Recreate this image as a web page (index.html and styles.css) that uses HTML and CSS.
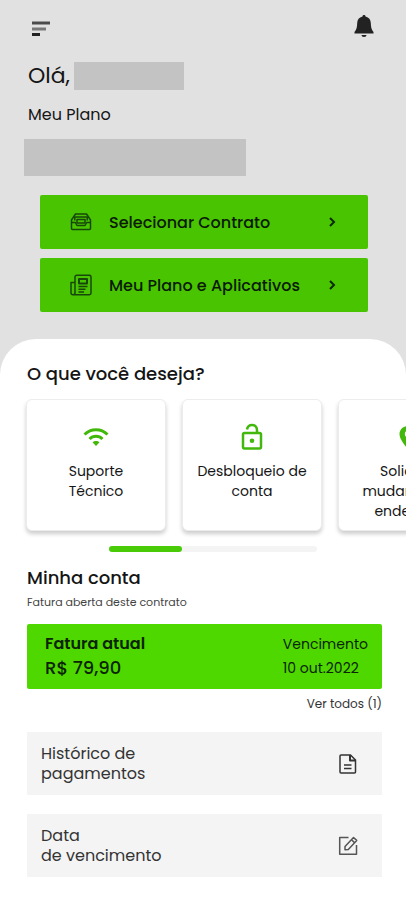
FILE: index.html
```
<!DOCTYPE html>
<html lang="pt-BR">
<head>
    <meta charset="UTF-8">
    <meta name="viewport" content="width=device-width, initial-scale=1.0">
    <title>Minha conta</title>
    <link rel="stylesheet" href="styles.css">
</head>
<body>

<header class="hero">
    <nav class="topbar">
        <button class="icon-btn" type="button" aria-label="Menu">
            <svg width="20" height="22" viewBox="0 0 20 22">
                <path d="M0 8h18" stroke="#4a4a4a" stroke-width="3"/>
                <path d="M0 14h14" stroke="#777" stroke-width="3"/>
                <path d="M0 19.500h8" stroke="#222" stroke-width="3"/>
            </svg>
        </button>
        <button class="icon-btn" type="button" aria-label="Notificações">
            <svg width="20" height="22" viewBox="0 0 20 22">
                <path d="M10 0C9 0 8.500.6 8.500 1.400C5 2.200 3.300 4.500 3.200 8C3 12 2.800 14.500.5 17v1.500h19V17C17.200 14.500 17 12 16.800 8C16.700 4.500 15 2.200 11.500 1.400C11.500.6 11 0 10 0Z" fill="#222"/>
                <path d="M7.500 20h5c0 1.200-1 2-2.500 2s-2.500-.8-2.500-2Z" fill="#222"/>
            </svg>
        </button>
    </nav>

    <h1 class="greeting">Olá, <span class="hidden-name"></span></h1>
    <p class="plan-label">Meu Plano</p>
    <div class="hidden-plan"></div>

    <div class="actions">
        <a class="action" href="#contrato">
            <svg class="action-icon" width="22" height="22" viewBox="0 0 22 22" fill="none" stroke="#17470a" stroke-width="1.500" stroke-linejoin="round">
                <path d="M1.500 9L5.500 3h11l4 6v8.500c0 .6-.4 1-1 1h-17c-.6 0-1-.4-1-1Z"/>
                <path d="M1.500 11.500h3.800l1.700 3h8l1.700-3h3.800"/>
                <path d="M4.800 9.500V6h12.400v3.500M7 8.500h8v3.500H7Z"/>
            </svg>
            <span class="action-text">Selecionar Contrato</span>
            <svg width="8" height="10" viewBox="0 0 8 10" fill="none" stroke="#0d2a04" stroke-width="2"><path d="M2 1l4 4-4 4"/></svg>
        </a>
        <a class="action" href="#plano">
            <svg class="action-icon" width="22" height="22" viewBox="0 0 22 22" fill="none" stroke="#17470a" stroke-width="1.500" stroke-linejoin="round">
                <path d="M5 19V3c0-1 .7-1.700 1.700-1.700h12.600c1 0 1.700.7 1.700 1.700v16c0 1-.7 1.700-1.700 1.700H3c-1.200 0-2-.8-2-2V8.500h4M5 19c0 1-.8 1.700-2 1.700"/>
                <path d="M9 5h8v4.500H9Z" stroke-width="2"/>
                <path d="M8.500 12.500h9M8.500 15.200h7M8.500 18h5.500"/>
            </svg>
            <span class="action-text">Meu Plano e Aplicativos</span>
            <svg width="8" height="10" viewBox="0 0 8 10" fill="none" stroke="#0d2a04" stroke-width="2"><path d="M2 1l4 4-4 4"/></svg>
        </a>
    </div>
</header>

<main class="panel">
    <h2 class="title">O que você deseja?</h2>

    <div class="cards">
        <a class="card" href="#suporte">
            <svg class="card-icon" width="28" height="28" viewBox="0 0 28 28" fill="none" stroke="#43b80c" stroke-width="3">
                <path d="M2.500 11.500C9 5 19 5 25.500 11.500"/>
                <path d="M7.500 16c3.700-3.700 9.300-3.700 13 0"/>
                <path d="M10.500 19.300c2-1.900 5-1.900 7 0L14 23Z" fill="#43b80c" stroke="none"/>
            </svg>
            <span>Suporte<br>Técnico</span>
        </a>
        <a class="card" href="#desbloqueio">
            <svg class="card-icon" width="28" height="28" viewBox="0 0 28 28" fill="none" stroke="#43b80c" stroke-width="2.500">
                <rect x="5" y="10" width="18" height="15.500" rx="1.500"/>
                <path d="M9 6.500C9.500 3.700 11.500 2 14 2c3 0 5 2 5 5v3"/>
                <circle cx="14" cy="17.800" r="2.300" fill="#43b80c" stroke="none"/>
            </svg>
            <span>Desbloqueio de<br>conta</span>
        </a>
        <a class="card" href="#mudanca">
            <svg class="card-icon" width="28" height="28" viewBox="0 0 28 28">
                <path d="M14 3C9 3 5.500 6.600 5.500 11.200C5.500 17 14 26 14 26s8.500-9 8.500-14.800C22.500 6.600 19 3 14 3Zm0 11.200a3.200 3.200 0 1 1 0-6.400a3.200 3.200 0 0 1 0 6.400Z" fill="#43b80c"/>
            </svg>
            <span>Solicitar<br>mudança de<br>endereço</span>
        </a>
    </div>
    <div class="scroll-track"><div class="scroll-thumb"></div></div>

    <h2 class="title">Minha conta</h2>
    <p class="subtitle">Fatura aberta deste contrato</p>

    <section class="invoice">
        <div>
            <p class="invoice-name">Fatura atual</p>
            <p class="invoice-value">R$ 79,90</p>
        </div>
        <div>
            <p class="due">Vencimento</p>
            <p class="due">10 out.2022</p>
        </div>
    </section>
    <a class="see-all" href="#faturas">Ver todos (1)</a>

    <div class="options">
        <a class="option" href="#historico">
            <span>Histórico de<br>pagamentos</span>
            <svg width="20" height="20" viewBox="0 0 20 20" fill="none" stroke="#333" stroke-width="1.500" stroke-linejoin="round">
                <path d="M3 1h9.500l5 5v12c0 .6-.4 1-1 1H3c-.6 0-1-.4-1-1V2c0-.6.4-1 1-1Z"/>
                <path d="M12 1v5.500h5.500" stroke-width="2"/>
                <path d="M6 11h7.500M6 14.500h7.500"/>
            </svg>
        </a>
        <a class="option" href="#vencimento">
            <span>Data<br>de vencimento</span>
            <svg width="20" height="20" viewBox="0 0 20 20" fill="none" stroke="#555" stroke-width="1.500" stroke-linejoin="round">
                <path d="M10.500 1.500H1.700v16.800h16.800V9"/>
                <path d="M7 13.800v-3.300L15.500 1.500l3.200 2.900-8.400 9.100Z"/>
                <path d="M13.500 3.800l3 2.800"/>
            </svg>
        </a>
    </div>
</main>

</body>
</html>
```
FILE: styles.css
```
* {
    box-sizing: border-box;
    margin: 0;
    padding: 0;
}

body {
    display: flex;
    flex-direction: column;
    min-height: 100vh;
    background: #e1e1e1;
    color: #151515;
    font-family: "Poppins", "Inter", sans-serif;
}

a {
    color: inherit;
    text-decoration: none;
}

svg {
    display: block;
    flex-shrink: 0;
}

/* Top area */
.hero {
    padding: 15px 24px 27px;
}

.topbar {
    display: flex;
    justify-content: space-between;
    align-items: center;
    height: 22px;
    padding: 0 8px;
}

.icon-btn {
    border: 0;
    background: none;
    cursor: pointer;
}

.greeting {
    display: flex;
    align-items: center;
    gap: 4px;
    margin-top: 25px;
    padding-left: 4px;
    font-size: 22px;
    font-weight: 400;
    line-height: 28px;
}

.hidden-name {
    width: 110px;
    height: 28px;
    background: #c3c3c3;
}

.plan-label {
    margin-top: 14px;
    padding-left: 4px;
    font-size: 16px;
    line-height: 22px;
}

.hidden-plan {
    width: 62%;
    height: 37px;
    margin-top: 13px;
    background: #c3c3c3;
}

.actions {
    display: flex;
    flex-direction: column;
    gap: 9px;
    margin-top: 19px;
    padding: 0 14px 0 16px;
}

.action {
    display: flex;
    align-items: center;
    height: 54px;
    padding: 0 32px 0 30px;
    border-radius: 2px;
    background: #49c400;
    color: #0a1a04;
    font-size: 16px;
    font-weight: 500;
}

.action-icon {
    margin-right: 17px;
}

.action-text {
    flex: 1;
    white-space: nowrap;
}

/* White panel */
.panel {
    flex: 1;
    padding: 24px 24px 23px 27px;
    border-radius: 36px 36px 0 0;
    background: #fff;
    overflow: hidden;
}

.title {
    font-size: 18px;
    font-weight: 500;
    line-height: 22px;
}

.cards {
    display: flex;
    gap: 16px;
    margin: 14px -24px 0 -27px;
    padding: 0 26px 15px;
    overflow-x: auto;
    scrollbar-width: none;
}

.card {
    display: flex;
    flex: 0 0 140px;
    flex-direction: column;
    align-items: center;
    height: 132px;
    padding-top: 23px;
    border: 1px solid #ececec;
    border-radius: 6px;
    background: #fff;
    box-shadow: 0 3px 4px rgba(0, 0, 0, 0.2);
    font-size: 14px;
    line-height: 20px;
    text-align: center;
    white-space: nowrap;
}

.card-icon {
    margin-bottom: 10px;
}

.scroll-track {
    width: 208px;
    height: 6px;
    margin: 0 auto 15px 82px;
    border-radius: 3px;
    background: #f4f4f4;
}

.scroll-thumb {
    width: 35%;
    height: 6px;
    border-radius: 3px;
    background: #4acb08;
}

.subtitle {
    margin-top: 4px;
    color: #444;
    font-size: 11px;
    line-height: 18px;
}

.invoice {
    display: flex;
    justify-content: space-between;
    height: 65px;
    margin-top: 13px;
    padding: 8px 14px 0 18px;
    border-radius: 2px;
    background: #4fd800;
    color: #0b2404;
    line-height: 24px;
}

.invoice-name {
    font-size: 16px;
    font-weight: 600;
}

.invoice-value {
    font-size: 18px;
    font-weight: 500;
}

.due {
    font-size: 14px;
}

.see-all {
    display: block;
    margin-top: 6px;
    color: #333;
    font-size: 12px;
    line-height: 18px;
    text-align: right;
}

.options {
    display: flex;
    flex-direction: column;
    gap: 19px;
    margin-top: 19px;
}

.option {
    display: flex;
    justify-content: space-between;
    align-items: center;
    height: 63px;
    padding: 0 24px 0 14px;
    background: #f4f4f4;
    color: #333;
    font-size: 16px;
    line-height: 20px;
}
```
